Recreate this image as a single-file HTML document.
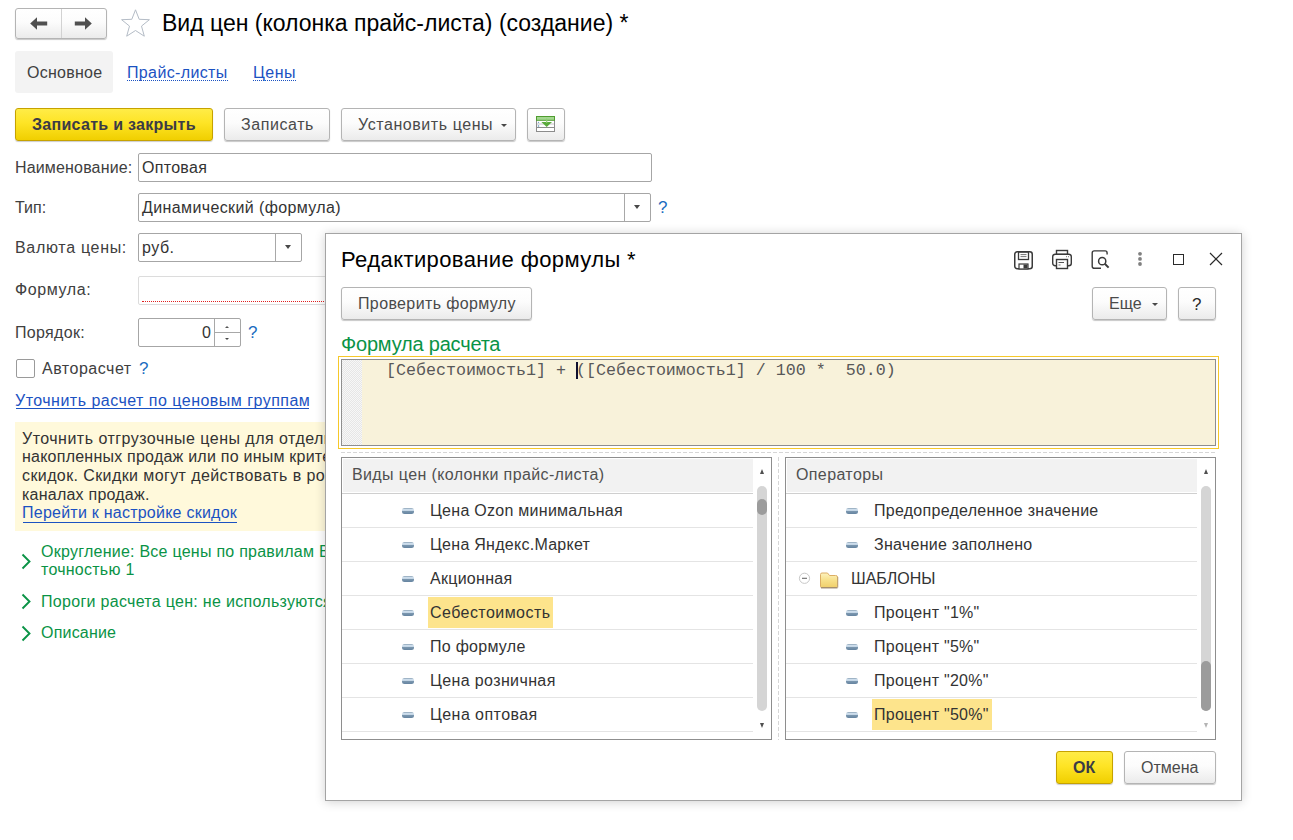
<!DOCTYPE html>
<html><head><meta charset="utf-8">
<style>
*{box-sizing:border-box;margin:0;padding:0}
html,body{width:1293px;height:840px;overflow:hidden;background:#fff}
body{position:relative;font-family:"Liberation Sans",sans-serif;font-size:16px;color:#404040}
.a{position:absolute;white-space:pre;line-height:16px;letter-spacing:.3px}
.btn{position:absolute;border:1px solid #b4b4b4;border-radius:3px;background:linear-gradient(#ffffff 0%,#fcfcfc 45%,#ebebeb 100%);box-shadow:0 1px 1px rgba(0,0,0,.22)}
.ybtn{position:absolute;border:1px solid #c6a200;border-radius:3px;background:linear-gradient(#ffec47 0%,#fee425 45%,#f0cf00 100%);box-shadow:0 1px 1px rgba(0,0,0,.2)}
.inp{position:absolute;border:1px solid #a6a6a6;border-radius:2px;background:#fff}
.lnk{color:#1b52c2}
.grn{color:#0a9346}
.dd{position:absolute;width:0;height:0;border-left:3px solid transparent;border-right:3px solid transparent;border-top:4px solid #484848}
.q{position:absolute;color:#1a6cc0;font-size:17px;line-height:17px;white-space:pre}
.hl{position:absolute;height:31px;background:#fde48c}
.ln{position:absolute;height:1px;background:#e4e4e4}
.ico{position:absolute;width:12px;height:6px;border-radius:2.5px;background:linear-gradient(#9fb4c6 0%,#9fb4c6 18%,#d0e0ee 18%,#c4d6e6 42%,#7d98b0 50%,#6584a0 100%)}
.it{position:absolute;white-space:pre;line-height:16px;letter-spacing:.27px;color:#333}
</style></head><body>

<!-- nav buttons -->
<div class="btn" style="left:15px;top:8px;width:92px;height:31px"></div>
<div style="position:absolute;left:61px;top:9px;width:1px;height:29px;background:#d2d2d2"></div>
<svg style="position:absolute;left:28px;top:15px" width="22" height="17" viewBox="0 0 22 17"><path d="M2.2 8.5 L9 2.2 V6.6 H19.2 V10.4 H9 V14.8 Z" fill="#505050"/></svg>
<svg style="position:absolute;left:72px;top:15px" width="22" height="17" viewBox="0 0 22 17"><path d="M19.8 8.5 L13 2.2 V6.6 H2.8 V10.4 H13 V14.8 Z" fill="#505050"/></svg>
<!-- star -->
<svg style="position:absolute;left:120px;top:8px" width="31" height="30" viewBox="0 0 31 30"><path d="M15.5 1.8 L19.2 11.3 L29.4 11.7 L21.5 18.1 L24.3 28.2 L15.5 22.5 L6.7 28.2 L9.5 18.1 L1.6 11.7 L11.8 11.3 Z" fill="none" stroke="#b4bcc6" stroke-width="1"/></svg>
<div class="a" style="left:162px;top:11.5px;font-size:23px;line-height:23px;color:#000;letter-spacing:0">Вид цен (колонка прайс-листа) (создание) *</div>

<!-- tabs -->
<div style="position:absolute;left:15px;top:51px;width:98px;height:42px;background:#f3f3f3;border-radius:3px"></div>
<div class="a" style="left:27px;top:65px;letter-spacing:.26px">Основное</div>
<div class="a lnk" style="left:127px;top:65px;letter-spacing:.36px">Прайс-листы</div>
<div style="position:absolute;left:127px;top:80px;width:101px;height:1px;border-top:1px dotted #1b52c2"></div>
<div class="a lnk" style="left:253px;top:65px;letter-spacing:.5px">Цены</div>
<div style="position:absolute;left:253px;top:80px;width:43px;height:1px;border-top:1px dotted #1b52c2"></div>

<!-- command bar -->
<div class="ybtn" style="left:15px;top:108px;width:198px;height:33px"></div>
<div class="a" style="left:32px;top:116.5px;font-weight:bold;color:#3b3b46;letter-spacing:.29px">Записать и закрыть</div>
<div class="btn" style="left:224px;top:108px;width:106px;height:33px"></div>
<div class="a" style="left:241px;top:116.5px;color:#4a4a4a;letter-spacing:.57px">Записать</div>
<div class="btn" style="left:341px;top:108px;width:175px;height:33px"></div>
<div class="a" style="left:358px;top:116.5px;color:#4a4a4a;letter-spacing:.57px">Установить цены</div>
<div class="dd" style="left:501px;top:124px;border-top-width:3px"></div>
<div class="btn" style="left:527px;top:108px;width:38px;height:33px"></div>
<svg style="position:absolute;left:536px;top:116px" width="20" height="17" viewBox="0 0 20 17">
<rect x="0.5" y="0.5" width="18" height="15" fill="#fff" stroke="#8c8c8c"/>
<line x1="1" y1="8" x2="18" y2="8" stroke="#c4c4c4"/>
<line x1="1" y1="11.5" x2="18" y2="11.5" stroke="#8c8c8c"/>
<rect x="0" y="0" width="19" height="4.8" fill="#4f9c2f"/>
<rect x="1" y="1" width="17" height="2.8" fill="#a3d78f"/>
<path d="M5.4 6 L16 6 L10.7 11 Z" fill="#5aaa3c"/>
<line x1="10.7" y1="2.5" x2="10.7" y2="7" stroke="#8fcf74" stroke-width="1.2"/>
<circle cx="2.5" cy="6.5" r=".7" fill="#7aa6c8"/><circle cx="2.5" cy="10" r=".8" fill="#5a8fb8"/>
</svg>

<!-- form -->
<div class="a" style="left:15px;top:159.5px;letter-spacing:.16px">Наименование:</div>
<div class="inp" style="left:138px;top:153px;width:514px;height:29px"></div>
<div class="a" style="left:142px;top:159.5px;color:#333">Оптовая</div>

<div class="a" style="left:15px;top:199.5px;letter-spacing:0">Тип:</div>
<div class="inp" style="left:138px;top:193px;width:513px;height:29px"></div>
<div style="position:absolute;left:624px;top:194px;width:1px;height:27px;background:#a8a8a8"></div>
<div class="dd" style="left:634px;top:205px"></div>
<div class="a" style="left:142px;top:199.5px;color:#333;letter-spacing:.38px">Динамический (формула)</div>
<div class="q" style="left:658px;top:199px">?</div>

<div class="a" style="left:15px;top:239.5px;letter-spacing:.69px">Валюта цены:</div>
<div class="inp" style="left:138px;top:233px;width:164px;height:29px"></div>
<div style="position:absolute;left:275px;top:234px;width:1px;height:27px;background:#a8a8a8"></div>
<div class="dd" style="left:285px;top:245px"></div>
<div class="a" style="left:142px;top:239.5px;color:#333;letter-spacing:.5px">руб.</div>

<div class="a" style="left:15px;top:281.5px;letter-spacing:.59px">Формула:</div>
<div class="inp" style="left:138px;top:276px;width:200px;height:29px;border-color:#dcdcdc"></div>
<div style="position:absolute;left:142px;top:301px;width:196px;height:1px;border-top:1px dotted #e02020"></div>

<div class="a" style="left:15px;top:324.5px;letter-spacing:.33px">Порядок:</div>
<div class="inp" style="left:138px;top:318px;width:103px;height:29px"></div>
<div style="position:absolute;left:214px;top:319px;width:1px;height:27px;background:#a8a8a8"></div>
<div style="position:absolute;left:215px;top:332px;width:25px;height:1px;background:#a8a8a8"></div>
<div class="dd" style="left:225px;top:326px;border-top:0;border-bottom:2px solid #555;border-left-width:2px;border-right-width:2px"></div>
<div class="dd" style="left:225px;top:338px;border-top-width:2px;border-left-width:2px;border-right-width:2px"></div>
<div class="a" style="left:202px;top:324.5px;color:#333">0</div>
<div class="q" style="left:248px;top:324px">?</div>

<div style="position:absolute;left:16px;top:359px;width:19px;height:19px;border:1px solid #9a9a9a;border-radius:2px;background:#fff"></div>
<div class="a" style="left:42px;top:360.5px;letter-spacing:.52px">Авторасчет</div>
<div class="q" style="left:139px;top:360px">?</div>

<div class="a lnk" style="left:15px;top:392.5px;letter-spacing:.48px">Уточнить расчет по ценовым группам</div>
<div style="position:absolute;left:16px;top:408px;width:293px;height:1px;background:#1b52c2"></div>

<!-- info -->
<div style="position:absolute;left:15px;top:422px;width:320px;height:109px;background:#fff9db"></div>
<div class="a" style="left:22px;top:431px;color:#333;letter-spacing:.48px">Уточнить отгрузочные цены для отдельных клиентов</div>
<div class="a" style="left:22px;top:449px;color:#333;letter-spacing:.23px">накопленных продаж или по иным критериям</div>
<div class="a" style="left:22px;top:468px;color:#333;letter-spacing:.4px">скидок. Скидки могут действовать в розничных</div>
<div class="a" style="left:22px;top:487px;color:#333;letter-spacing:.23px">каналах продаж.</div>
<div class="a lnk" style="left:22px;top:505px;letter-spacing:.24px">Перейти к настройке скидок</div>
<div style="position:absolute;left:23px;top:522px;width:214px;height:1px;background:#1b52c2"></div>

<!-- groups -->
<svg style="position:absolute;left:20.5px;top:553px" width="11" height="17" viewBox="0 0 11 17"><path d="M1.5 1.5 L8.5 8.5 L1.5 15.5" fill="none" stroke="#0a9346" stroke-width="1.9"/></svg>
<div class="a grn" style="left:41px;top:543.5px;letter-spacing:.25px">Округление: Все цены по правилам Все</div>
<div class="a grn" style="left:41px;top:562px;letter-spacing:.25px">точностью 1</div>
<svg style="position:absolute;left:20.5px;top:593px" width="11" height="17" viewBox="0 0 11 17"><path d="M1.5 1.5 L8.5 8.5 L1.5 15.5" fill="none" stroke="#0a9346" stroke-width="1.9"/></svg>
<div class="a grn" style="left:41px;top:594px;letter-spacing:.3px">Пороги расчета цен: не используются</div>
<svg style="position:absolute;left:20.5px;top:625px" width="11" height="17" viewBox="0 0 11 17"><path d="M1.5 1.5 L8.5 8.5 L1.5 15.5" fill="none" stroke="#0a9346" stroke-width="1.9"/></svg>
<div class="a grn" style="left:41px;top:624.7px;letter-spacing:.2px">Описание</div>

<!-- DIALOG -->
<div style="position:absolute;left:325px;top:233px;width:917px;height:568px;background:#fff;border:1px solid #a4a4a4;box-shadow:0 1px 10px rgba(0,0,0,.19)"></div>
<div class="a" style="left:341px;top:249.2px;font-size:22px;line-height:22px;color:#000;letter-spacing:.4px">Редактирование формулы *</div>
<!-- header icons -->
<svg style="position:absolute;left:1013px;top:250px" width="21" height="20" viewBox="0 0 21 20">
<rect x="1.75" y="1.75" width="17.5" height="17" rx="2.5" fill="none" stroke="#3a3a3a" stroke-width="1.5"/>
<rect x="5.5" y="2" width="10" height="7.5" fill="none" stroke="#3a3a3a" stroke-width="1.3"/>
<line x1="7.5" y1="4.6" x2="13.5" y2="4.6" stroke="#666" stroke-width="0.9"/>
<line x1="7.5" y1="6.6" x2="13.5" y2="6.6" stroke="#666" stroke-width="0.9"/>
<rect x="6" y="14" width="9" height="5" fill="#fff" stroke="#3a3a3a" stroke-width="1.2"/>
<rect x="10.5" y="14.5" width="4" height="4" fill="#3a3a3a"/>
</svg>
<svg style="position:absolute;left:1051px;top:249px" width="22" height="21" viewBox="0 0 22 21">
<rect x="5.5" y="1.5" width="11" height="4" fill="none" stroke="#3a3a3a" stroke-width="1.4"/>
<rect x="1.7" y="5.2" width="18.6" height="11.5" rx="2.5" fill="#fff" stroke="#3a3a3a" stroke-width="1.4"/>
<rect x="5.5" y="10.5" width="11" height="9" fill="#fff" stroke="#3a3a3a" stroke-width="1.4"/>
<line x1="7.5" y1="13.5" x2="13" y2="13.5" stroke="#555" stroke-width="1"/>
<line x1="7.5" y1="16" x2="9.5" y2="16" stroke="#777" stroke-width="1"/>
<line x1="15" y1="7.7" x2="16" y2="7.7" stroke="#777" stroke-width="1"/>
<line x1="17" y1="7.7" x2="18" y2="7.7" stroke="#777" stroke-width="1"/>
</svg>
<svg style="position:absolute;left:1090px;top:249px" width="22" height="21" viewBox="0 0 22 21">
<path d="M11 19.3 H4.3 Q2.2 19.3 2.2 17.2 V4 Q2.2 1.9 4.3 1.9 H15.1 Q17.1 1.9 17.1 4 V5.5" fill="none" stroke="#3a3a3a" stroke-width="1.4"/>
<circle cx="12.2" cy="12.2" r="3.6" fill="none" stroke="#3a3a3a" stroke-width="1.5"/>
<line x1="14.8" y1="14.8" x2="18.6" y2="18.6" stroke="#3a3a3a" stroke-width="2"/>
</svg>
<svg style="position:absolute;left:1135px;top:249px" width="10" height="20" viewBox="0 0 10 20">
<circle cx="5" cy="4.8" r="1.9" fill="#808080"/><circle cx="5" cy="9.9" r="1.9" fill="#808080"/><circle cx="5" cy="15" r="1.9" fill="#808080"/>
</svg>
<div style="position:absolute;left:1173px;top:254px;width:11px;height:11px;border:1.3px solid #2a2a2a"></div>
<svg style="position:absolute;left:1208px;top:251px" width="16" height="16" viewBox="0 0 16 16"><path d="M2 2 L14 14 M14 2 L2 14" stroke="#2a2a2a" stroke-width="1.2"/></svg>

<!-- toolbar -->
<div class="btn" style="left:341px;top:287px;width:191px;height:33px"></div>
<div class="a" style="left:358px;top:296px;color:#4a4a4a;letter-spacing:.37px">Проверить формулу</div>
<div class="btn" style="left:1092px;top:287px;width:75px;height:33px"></div>
<div class="a" style="left:1109px;top:295.5px;color:#4a4a4a;letter-spacing:0">Еще</div>
<div class="dd" style="left:1152px;top:303px;border-top-width:3px"></div>
<div class="btn" style="left:1178px;top:287px;width:38px;height:33px"></div>
<div class="a" style="left:1192px;top:297px;color:#2a2a2a;font-size:17px;letter-spacing:0">?</div>

<div class="a grn" style="left:341px;top:333.5px;font-size:20px;line-height:20px;letter-spacing:-.2px">Формула расчета</div>
<!-- formula editor -->
<div style="position:absolute;left:338px;top:356px;width:881px;height:93px;border:1px solid #f6c82a"></div>
<div style="position:absolute;left:341px;top:359px;width:875px;height:87px;border:1px solid #8e8e8e;background:#f8f2da"></div>
<div style="position:absolute;left:342px;top:360px;width:20px;height:85px;background:repeating-conic-gradient(#e6e6e6 0 25%,#f7f7f7 0 50%) 0 0/2px 2px"></div>
<div class="a" style="left:386px;top:362.2px;font-family:'Liberation Mono',monospace;font-size:16.67px;line-height:17px;color:#585858;letter-spacing:0">[Себестоимость1] + ([Себестоимость1] / 100 *  50.0)</div>
<div style="position:absolute;left:576px;top:362px;width:2px;height:17px;background:#101030"></div>

<!-- dashed frame -->
<div style="position:absolute;left:341px;top:452px;width:875px;height:1px;background:repeating-linear-gradient(90deg,#d6d6d6 0 4px,transparent 4px 6px)"></div>
<div style="position:absolute;left:778px;top:457px;width:1px;height:283px;background:repeating-linear-gradient(180deg,#d6d6d6 0 4px,transparent 4px 6px)"></div>

<div style="position:absolute;left:341px;top:457px;width:431px;height:283px;border:1px solid #8e8e8e;background:#fff"></div>
<div style="position:absolute;left:343px;top:459px;width:410px;height:33px;background:#f2f2f2"></div>
<div style="position:absolute;left:342px;top:493px;width:411px;height:1px;background:#cfcfcf"></div>
<div class="a" style="left:352px;top:466.6px;color:#505050;letter-spacing:.38px">Виды цен (колонки прайс-листа)</div>
<div class="ln" style="left:342px;top:527px;width:411px"></div>
<div class="ico" style="left:402px;top:508px"></div>
<div class="it" style="left:430px;top:503.0px">Цена Ozon минимальная</div>
<div class="ln" style="left:342px;top:561px;width:411px"></div>
<div class="ico" style="left:402px;top:542px"></div>
<div class="it" style="left:430px;top:537.0px">Цена Яндекс.Маркет</div>
<div class="ln" style="left:342px;top:595px;width:411px"></div>
<div class="ico" style="left:402px;top:576px"></div>
<div class="it" style="left:430px;top:571.0px">Акционная</div>
<div class="ln" style="left:342px;top:629px;width:411px"></div>
<div class="hl" style="left:428px;top:597px;width:125px"></div>
<div class="ico" style="left:402px;top:610px"></div>
<div class="it" style="left:430px;top:605.0px;letter-spacing:.44px">Себестоимость</div>
<div class="ln" style="left:342px;top:663px;width:411px"></div>
<div class="ico" style="left:402px;top:644px"></div>
<div class="it" style="left:430px;top:639.0px">По формуле</div>
<div class="ln" style="left:342px;top:697px;width:411px"></div>
<div class="ico" style="left:402px;top:678px"></div>
<div class="it" style="left:430px;top:673.0px;letter-spacing:.38px">Цена розничная</div>
<div class="ln" style="left:342px;top:731px;width:411px"></div>
<div class="ico" style="left:402px;top:712px"></div>
<div class="it" style="left:430px;top:707.0px;letter-spacing:.44px">Цена оптовая</div>
<div style="position:absolute;left:757px;top:486px;width:10px;height:225px;border-radius:5px;background:#d5d5d5"></div>
<div style="position:absolute;left:757px;top:499px;width:10px;height:16px;border-radius:5px;background:#9c9c9c"></div>
<div class="dd" style="left:760px;top:469px;border-top:0;border-bottom:5px solid #505050;border-left-width:2.5px;border-right-width:2.5px"></div>
<div class="dd" style="left:760px;top:723px;border-top-width:5px;border-top-color:#505050;border-left-width:2.5px;border-right-width:2.5px"></div>
<div style="position:absolute;left:785px;top:457px;width:431px;height:283px;border:1px solid #8e8e8e;background:#fff"></div>
<div style="position:absolute;left:787px;top:459px;width:410px;height:33px;background:#f2f2f2"></div>
<div style="position:absolute;left:786px;top:493px;width:411px;height:1px;background:#cfcfcf"></div>
<div class="a" style="left:796px;top:466.6px;color:#505050;letter-spacing:.38px">Операторы</div>
<div class="ln" style="left:786px;top:527px;width:411px"></div>
<div class="ico" style="left:846px;top:508px"></div>
<div class="it" style="left:874px;top:503.0px">Предопределенное значение</div>
<div class="ln" style="left:786px;top:561px;width:411px"></div>
<div class="ico" style="left:846px;top:542px"></div>
<div class="it" style="left:874px;top:537.0px">Значение заполнено</div>
<div class="ln" style="left:786px;top:595px;width:411px"></div>
<svg style="position:absolute;left:798px;top:572px" width="13" height="13" viewBox="0 0 13 13"><circle cx="6.5" cy="6.3" r="5.1" fill="none" stroke="#c8c8c8" stroke-width="1"/><line x1="4" y1="6.3" x2="9" y2="6.3" stroke="#6a6a6a" stroke-width="1.1"/></svg>
<svg style="position:absolute;left:819px;top:572px" width="20" height="17" viewBox="0 0 20 17"><defs><linearGradient id="fg" x1="0" y1="0" x2="0" y2="1"><stop offset="0" stop-color="#fdf3c0"/><stop offset=".5" stop-color="#f7e08a"/><stop offset="1" stop-color="#f0cf6a"/></linearGradient></defs>
<path d="M1.5 2.5 Q1.5 1 3 1 H8.5 L10.5 3.5 H16.5 Q18.5 3.5 18.5 5 V14.5 Q18.5 15.5 17.5 15.5 H2.5 Q1.5 15.5 1.5 14.5 Z" fill="url(#fg)" stroke="#dcae64" stroke-width="1"/>
<line x1="2" y1="15.8" x2="18.5" y2="15.8" stroke="#9c8a70" stroke-width="1.3"/><line x1="18.8" y1="5" x2="18.8" y2="15.5" stroke="#b09a78" stroke-width=".8"/></svg>
<div class="it" style="left:851px;top:571px;letter-spacing:0px">ШАБЛОНЫ</div>
<div class="ln" style="left:786px;top:629px;width:411px"></div>
<div class="ico" style="left:846px;top:610px"></div>
<div class="it" style="left:874px;top:605.0px">Процент "1%"</div>
<div class="ln" style="left:786px;top:663px;width:411px"></div>
<div class="ico" style="left:846px;top:644px"></div>
<div class="it" style="left:874px;top:639.0px">Процент "5%"</div>
<div class="ln" style="left:786px;top:697px;width:411px"></div>
<div class="ico" style="left:846px;top:678px"></div>
<div class="it" style="left:874px;top:673.0px">Процент "20%"</div>
<div class="ln" style="left:786px;top:731px;width:411px"></div>
<div class="hl" style="left:872px;top:699px;width:120px"></div>
<div class="ico" style="left:846px;top:712px"></div>
<div class="it" style="left:874px;top:707.0px">Процент "50%"</div>
<div style="position:absolute;left:1201px;top:486px;width:10px;height:225px;border-radius:5px;background:#d5d5d5"></div>
<div style="position:absolute;left:1201px;top:661px;width:10px;height:50px;border-radius:5px;background:#9c9c9c"></div>
<div class="dd" style="left:1204px;top:469px;border-top:0;border-bottom:5px solid #505050;border-left-width:2.5px;border-right-width:2.5px"></div>
<div class="dd" style="left:1204px;top:723px;border-top-width:5px;border-top-color:#b4b4b4;border-left-width:2.5px;border-right-width:2.5px"></div>

<!-- footer -->
<div class="ybtn" style="left:1056px;top:751px;width:57px;height:33px"></div>
<div class="a" style="left:1073px;top:759.7px;font-weight:bold;color:#3b3b46;letter-spacing:0">ОК</div>
<div class="btn" style="left:1124px;top:751px;width:92px;height:33px"></div>
<div class="a" style="left:1141px;top:759.7px;color:#4a4a4a;letter-spacing:0">Отмена</div>

</body></html>
